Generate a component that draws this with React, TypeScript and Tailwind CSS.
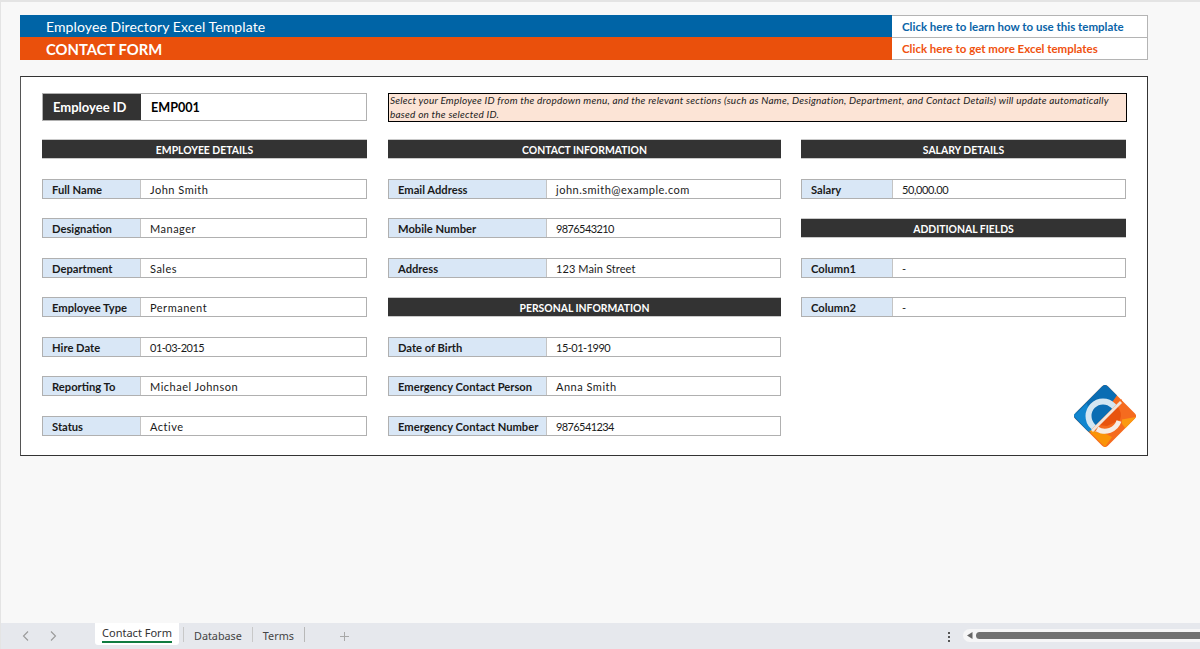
import React from "react";

function Head({ children }: { children: React.ReactNode }) {
  return (
    <div className="h-5 bg-[#333333] text-white text-[10.4px] font-bold flex items-center justify-center pt-[3px] border-y border-[#c9c9c9]">
      {children}
    </div>
  );
}

function Row({ label, value, labelW, track = "tracking-[0.5px]" }: { label: string; value: string; labelW: string; track?: string }) {
  return (
    <div className="h-5 flex border border-[#b0b0b0] bg-white text-[11.2px] text-[#1a1a1a]">
      <div className={`${labelW} shrink-0 bg-[#d9e7f6] border-r border-[#c4c4c4] font-bold flex items-center pt-[3px] whitespace-nowrap`}>
        {label}
      </div>
      <div className={`flex-1 flex items-center pt-[3px] pl-[9px] text-[11px] ${track} whitespace-nowrap`}>{value}</div>
    </div>
  );
}

function Logo() {
  return (
    <svg width="62" height="62" viewBox="0 0 62 62" className="absolute left-[1073px] top-[383px]">
      <defs>
        <clipPath id="d">
          <rect x="8" y="8" width="46" height="46" rx="4" transform="rotate(45 31 31)" />
        </clipPath>
      </defs>
      <g clipPath="url(#d)">
        <rect width="62" height="62" fill="#f56b1f" />
        <polygon points="0,0 50,0 17,48 0,40" fill="#0a6db3" />
        <polygon points="0,31 22,0 0,0" fill="#1c9ade" />
        <polygon points="0,31 13,18 19,46 14,46" fill="#1186cf" />
        <polygon points="15,46 31,62 38,52 22,44" fill="#fa9408" />
        <polygon points="45,35 62,32 52,44" fill="#fb9a12" />
      </g>
      <circle cx="29" cy="31" r="14.5" stroke="#d3e6f2" strokeWidth="6" fill="#0a6db3" />
      <polygon points="48,14 48,40 44,48 24,48 18,44" fill="#f56b1f" />
      <path d="M43 21 A14 14 0 0 1 46 35 L33 41 L25 40 Z" fill="#e8530e" />
      <path d="M23 44 A15 15 0 0 0 45 36" stroke="#f6ece4" strokeWidth="5" fill="none" />
      <path d="M47 17 L18 46" stroke="#f1e5dc" strokeWidth="2.8" />
    </svg>
  );
}

export default function App() {
  const date = "tracking-[-0.5px]";
  const num = "tracking-[-0.6px]";
  return (
    <div className="relative w-[1200px] h-[649px] overflow-hidden bg-[#f8f8f8] flex flex-col border-t-2 border-l border-[#e4e4e4]">
      <div className="flex-1 min-h-0 font-['Lato',sans-serif] pt-[13px] pl-[19px] flex flex-col">
        {/* Banner */}
        <div className="w-[1128px] flex h-[45px]">
          <div className="w-[872px] flex flex-col text-white">
            <div className="h-[22px] bg-[#0064a6] pl-[26px] flex items-center pt-px text-[14px] tracking-[0.1px] whitespace-nowrap">
              Employee Directory Excel Template
            </div>
            <div className="h-[23px] bg-[#ea500c] pl-[26px] flex items-center pt-[2px] text-[14.8px] font-bold whitespace-nowrap">
              CONTACT FORM
            </div>
          </div>
          <div className="flex-1 flex flex-col bg-white border border-l-0 border-[#b4b4b4] text-[11.5px] font-bold">
            <div className="h-[22px] border-b border-[#b4b4b4] pl-[10px] pt-px flex items-center text-[#0a64a8] whitespace-nowrap">
              Click here to learn how to use this template
            </div>
            <div className="flex-1 pl-[10px] pt-px flex items-center text-[#f0520f] whitespace-nowrap">
              Click here to get more Excel templates
            </div>
          </div>
        </div>

        {/* Sheet card */}
        <div className="mt-4 w-[1128px] h-[380px] bg-white border border-[#333333] border-l-[#555555] pt-4 pl-[21px] flex gap-x-[21px]">
          <div className="w-[325px] flex flex-col">
            <div className="h-7 flex border border-[#b0b0b0] mb-[18px]">
              <div className="w-[98px] bg-[#333333] text-white text-[13px] font-bold flex items-center pt-[2px] pl-[10px] whitespace-nowrap">
                Employee ID
              </div>
              <div className="flex-1 bg-white text-black text-[12.6px] font-bold flex items-center pt-[2px] pl-[10px]">
                EMP001
              </div>
            </div>
            <div className="flex flex-col gap-y-[19.5px]">
              <Head>EMPLOYEE DETAILS</Head>
              <Row label="Full Name" value="John Smith" labelW="w-[98px] pl-[9px]" />
              <Row label="Designation" value="Manager" labelW="w-[98px] pl-[9px]" />
              <Row label="Department" value="Sales" labelW="w-[98px] pl-[9px]" />
              <Row label="Employee Type" value="Permanent" labelW="w-[98px] pl-[9px]" />
              <Row label="Hire Date" value="01-03-2015" labelW="w-[98px] pl-[9px]" track={date} />
              <Row label="Reporting To" value="Michael Johnson" labelW="w-[98px] pl-[9px]" />
              <Row label="Status" value="Active" labelW="w-[98px] pl-[9px]" />
            </div>
          </div>

          <div className="flex flex-col">
            <div className="w-[739px] h-[29px] mb-[17px] border border-black bg-[#fce4d6] overflow-hidden italic text-[10px] leading-[14px] pl-[1px] pr-[14px] text-[#222222] tracking-[0.22px]">
              <div className="-mt-px">
                Select your Employee ID from the dropdown menu, and the relevant sections (such as Name, Designation, Department, and Contact Details) will update automatically based on the selected ID.
              </div>
            </div>
            <div className="flex gap-x-[20px]">
              <div className="w-[393px] flex flex-col gap-y-[19.5px]">
                <Head>CONTACT INFORMATION</Head>
                <Row label="Email Address" value="john.smith@example.com" labelW="w-[158px] pl-[9px]" />
                <Row label="Mobile Number" value="9876543210" labelW="w-[158px] pl-[9px]" track={num} />
                <Row label="Address" value="123 Main Street" labelW="w-[158px] pl-[9px]" track="tracking-[0.1px]" />
                <Head>PERSONAL INFORMATION</Head>
                <Row label="Date of Birth" value="15-01-1990" labelW="w-[158px] pl-[9px]" track={date} />
                <Row label="Emergency Contact Person" value="Anna Smith" labelW="w-[158px] pl-[9px]" />
                <Row label="Emergency Contact Number" value="9876541234" labelW="w-[158px] pl-[9px]" track={num} />
              </div>
              <div className="w-[325px] flex flex-col gap-y-[19.5px]">
                <Head>SALARY DETAILS</Head>
                <Row label="Salary" value="50,000.00" labelW="w-[91px] pl-[9px]" track="tracking-[-0.4px]" />
                <Head>ADDITIONAL FIELDS</Head>
                <Row label="Column1" value="-" labelW="w-[91px] pl-[9px]" />
                <Row label="Column2" value="-" labelW="w-[91px] pl-[9px]" />
              </div>
            </div>
          </div>
        </div>
      </div>

      <Logo />

      {/* Tab strip */}
      <div className="h-[26px] shrink-0 -ml-px bg-[#e6e8ed] flex items-start font-['Noto_Sans',sans-serif] text-[10.8px] text-[#444444]">
        <div className="w-[95px] flex pt-[7px] pl-[21px] gap-x-[17px] text-[#9a9a9a]">
          <svg width="10" height="12" viewBox="0 0 10 12" fill="none" stroke="currentColor" strokeWidth="1.1"><path d="M7 1.5 L2.5 6 L7 10.5" /></svg>
          <svg width="10" height="12" viewBox="0 0 10 12" fill="none" stroke="currentColor" strokeWidth="1.1"><path d="M3 1.5 L7.5 6 L3 10.5" /></svg>
        </div>
        <div className="w-[84px] h-[22px] bg-white rounded-b-[3px] flex flex-col items-center pt-[2px] text-[#333333] leading-[15px]">
          <span className="border-b-2 border-[#107c41] pb-[1px] text-[11px] whitespace-nowrap">Contact Form</span>
        </div>
        <div className="w-px h-[15px] bg-[#c8c8c8] mt-[4px] ml-[4px]" />
        <div className="pl-[10px] pr-[10px] pt-[5px] whitespace-nowrap">Database</div>
        <div className="w-px h-[15px] bg-[#c8c8c8] mt-[4px]" />
        <div className="pl-[10px] pr-[10px] pt-[5px] whitespace-nowrap">Terms</div>
        <div className="w-px h-[15px] bg-[#b8b8b8] mt-[4px]" />
        <svg width="11" height="11" viewBox="0 0 11 11" className="ml-[34px] mt-[8px] text-[#a8a8a8]" stroke="currentColor" strokeWidth="1"><path d="M5.5 1V10M1 5.5H10" /></svg>
        <div className="ml-[598px] mt-[9px] flex flex-col gap-y-[2px]">
          <span className="block w-[2px] h-[2px] bg-[#555555]" />
          <span className="block w-[2px] h-[2px] bg-[#555555]" />
          <span className="block w-[2px] h-[2px] bg-[#555555]" />
        </div>
        <div className="ml-[13px] mt-[6px] flex-1 h-[13px] bg-[#f6f6f7] rounded-l-full flex items-center pl-[4px]">
          <svg width="6" height="7" viewBox="0 0 6 7" className="text-[#666666]" fill="currentColor"><path d="M5.5 0V7L0 3.5Z" /></svg>
          <div className="ml-[3px] flex-1 h-[7px] bg-[#717171] rounded-l-full" />
        </div>
      </div>
    </div>
  );
}
